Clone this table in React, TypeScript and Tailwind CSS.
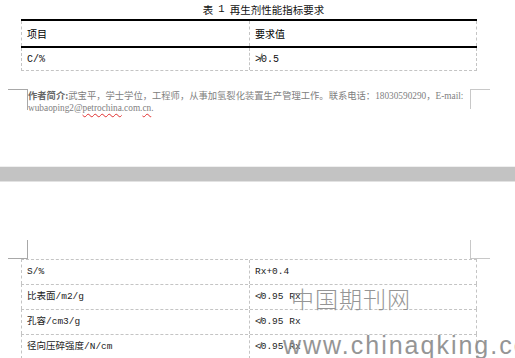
import React from "react";

const cjk = { fontFamily: '"Noto Sans CJK SC", "Liberation Sans", sans-serif' };
const mono = { fontFamily: '"Liberation Mono", "Noto Sans CJK SC", monospace' };
const serif = { fontFamily: '"Liberation Serif", "Noto Sans CJK SC", serif' };

function Row({ a, b, h, last }: { a: string; b: string; h: string; last?: boolean }) {
  return (
    <div
      className={`flex ${h} border-l border-r border-dashed border-[#c4c4c4] ${last ? "border-b" : ""}`}
    >
      <div className="w-[228px] flex items-center pl-[5px] border-r border-dashed border-[#c4c4c4] text-[10px] text-[#111]" style={mono}>
        {a}
      </div>
      <div className="flex-1 flex items-center pl-[5px] text-[10px] text-[#111]" style={mono}>
        {b}
      </div>
    </div>
  );
}

function Row2({ a, b }: { a: string; b: string }) {
  return (
    <div className="flex h-[25px] border-l border-r border-t border-dashed border-[#c4c4c4]">
      <div className="w-[228px] flex items-center pl-[5px] border-r border-dashed border-[#c4c4c4] text-[9.5px] text-[#222]" style={mono}>
        {a}
      </div>
      <div className="flex-1 flex items-center pl-[5px] text-[9.5px] text-[#222]" style={mono}>
        {b}
      </div>
    </div>
  );
}

export default function App() {
  return (
    <div className="relative w-[515px] h-[358px] overflow-hidden bg-white">
      {/* Page 1 */}
      <div className="h-[166px] flex flex-col">
        <div className="h-[19px] flex items-center justify-center pl-[12px] text-[10.5px] text-[#111] font-normal" style={cjk}>
          <span>表</span>
          <span className="mx-[5px]" style={mono}>1</span>
          <span>再生剂性能指标要求</span>
        </div>
        <div className="ml-[21px] w-[456px]">
          <div className="h-[2px] bg-black" />
          <div className="flex h-[25px] border-l border-r border-dashed border-[#c4c4c4]">
            <div className="w-[228px] flex items-center pl-[5px] border-r border-dashed border-[#c4c4c4] text-[10px] text-black" style={cjk}>
              项目
            </div>
            <div className="flex-1 flex items-center pl-[5px] text-[10px] text-black" style={cjk}>
              要求值
            </div>
          </div>
          <div className="h-[2px] bg-black" />
          <Row a="C/%" b="≯0.5" h="h-[23px]" last />
        </div>
        <div className="relative mt-[18px] pl-[28px] text-[9.3px] leading-[12px] text-[#808080]" style={serif}>
          <div className="absolute left-[8px] top-0 w-[20px] h-[21px] border-t border-r border-[#a8a8a8]" />
          <div className="absolute left-[470px] top-0 w-[20px] h-[20px] border-t border-l border-[#c8c8c8]" />
          <div className="whitespace-nowrap">
            <span className="font-bold text-[#666]" style={cjk}>作者简介</span>
            <span className="font-bold text-[#666]">:</span>
            <span style={cjk}>武宝平，学士学位，工程师，从事加氢裂化装置生产管理工作。联系电话：</span>
            18030590290，E-mail:
          </div>
          <div className="whitespace-nowrap">
            wubaoping2@
            <span className="underline decoration-wavy decoration-[#e03030] underline-offset-2">petrochina</span>
            .com.
            <span className="underline decoration-wavy decoration-[#e03030] underline-offset-2">cn</span>.
          </div>
        </div>
      </div>

      {/* Gap band */}
      <div className="h-[1px] bg-[#efefef]" />
      <div className="h-[14px] bg-[#c3c3c3]" />
      <div className="h-[1px] bg-[#e2e2e2]" />

      {/* Page 2 */}
      <div className="relative h-[77px]">
        <div className="absolute left-[8px] bottom-[0px] w-[20px] h-[19px] border-b border-r border-[#a8a8a8]" />
        <div className="absolute left-[470px] bottom-[0px] w-[20px] h-[19px] border-b border-l border-[#c8c8c8]" />
      </div>
      <div className="ml-[21px] w-[456px]">
        <Row2 a="S/%" b="Rx+0.4" />
        <Row2 a="比表面/m2/g" b="≮0.95 Rx" />
        <Row2 a="孔容/cm3/g" b="≮0.95 Rx" />
        <Row2 a="径向压碎强度/N/cm" b="≮0.95 Rx" />
      </div>

      {/* Watermark */}
      <div
        className="absolute left-[291px] top-[283px] text-[23px] leading-[30px] tracking-[1px] text-[#8a8a8a] opacity-90 font-light"
        style={{ fontFamily: '"Noto Sans CJK SC", serif' }}
      >
        中国期刊网
      </div>
      <div
        className="absolute left-[283px] top-[330px] text-[25px] leading-[30px] tracking-[2px] text-[#8a8a8a] opacity-90"
        style={{ fontFamily: '"Liberation Sans", sans-serif' }}
      >
        www.chinaqking.com
      </div>
    </div>
  );
}
